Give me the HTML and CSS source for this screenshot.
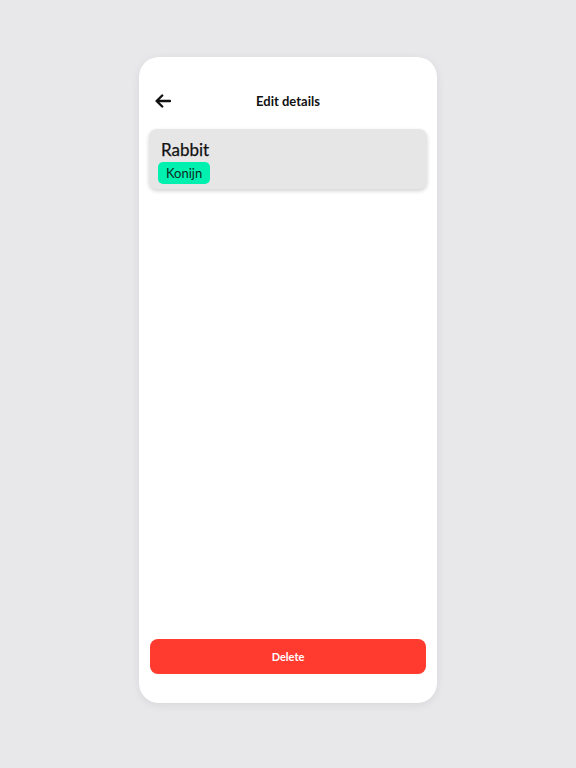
FILE: index.html
```html
<!DOCTYPE html>
<html lang="en">
<head>
<meta charset="utf-8">
<title>Edit details</title>
<link rel="stylesheet" href="styles.css">
</head>
<body>
<div class="phone">
  <header class="topbar">
    <button class="back" aria-label="Back">
      <svg width="16" height="14" viewBox="0 0 16 14" fill="none" stroke="#111" stroke-width="2.4" stroke-linecap="round" stroke-linejoin="round"><path d="M15 7H1.8M7.2 1.5L1.6 7l5.6 5.5"/></svg>
    </button>
    <h1 class="title">Edit details</h1>
    <span class="spacer"></span>
  </header>
  <div class="item">
    <div class="item-name">Rabbit</div>
    <span class="badge">Konijn</span>
  </div>
  <div class="fill"></div>
  <button class="delete">Delete</button>
</div>
</body>
</html>
```
FILE: styles.css
```css
html, body {
  margin: 0;
  padding: 0;
}
body {
  background: #e8e7e9;
  font-family: "Lato", "Noto Sans", sans-serif;
  width: 576px;
  height: 768px;
  display: flex;
  justify-content: center;
  padding-top: 57px;
  box-sizing: border-box;
}
.phone {
  width: 298px;
  height: 646px;
  background: #fff;
  border-radius: 20px;
  box-shadow: 0 2px 10px rgba(0,0,0,0.07);
  display: flex;
  flex-direction: column;
  padding: 34px 10px 29px;
  box-sizing: border-box;
}
.topbar {
  display: flex;
  align-items: center;
  height: 20px;
  padding: 0 6px;
}
.back {
  border: 0;
  background: none;
  padding: 0;
  width: 16px;
  height: 20px;
  display: flex;
  align-items: center;
}
.title {
  flex: 1;
  margin: 0;
  text-align: center;
  font-size: 13px;
  font-weight: 700;
  color: #111;
}
.spacer {
  width: 16px;
}
.item {
  margin-top: 18px;
  height: 60px;
  background: #e7e6e7;
  border-radius: 8px;
  box-shadow: 0 2px 4px rgba(0,0,0,0.18);
  padding: 10px 9px 0;
  box-sizing: border-box;
}
.item-name {
  font-size: 17px;
  color: #111;
  padding-left: 3px;
  line-height: 22px;
  -webkit-text-stroke: 0.25px #111;
}
.badge {
  display: inline-block;
  background: #00f0b0;
  color: #0c2a20;
  font-size: 13px;
  line-height: 22px;
  padding: 0 8px;
  border-radius: 5px;
  margin-top: 1px;
}
.fill {
  flex: 1;
}
.delete {
  margin: 0 1px;
  height: 35px;
  border: 0;
  border-radius: 8px;
  background: #ff3b30;
  color: #fff;
  font-family: "Lato", "Noto Sans", sans-serif;
  font-size: 11px;
  font-weight: 700;
}
```
